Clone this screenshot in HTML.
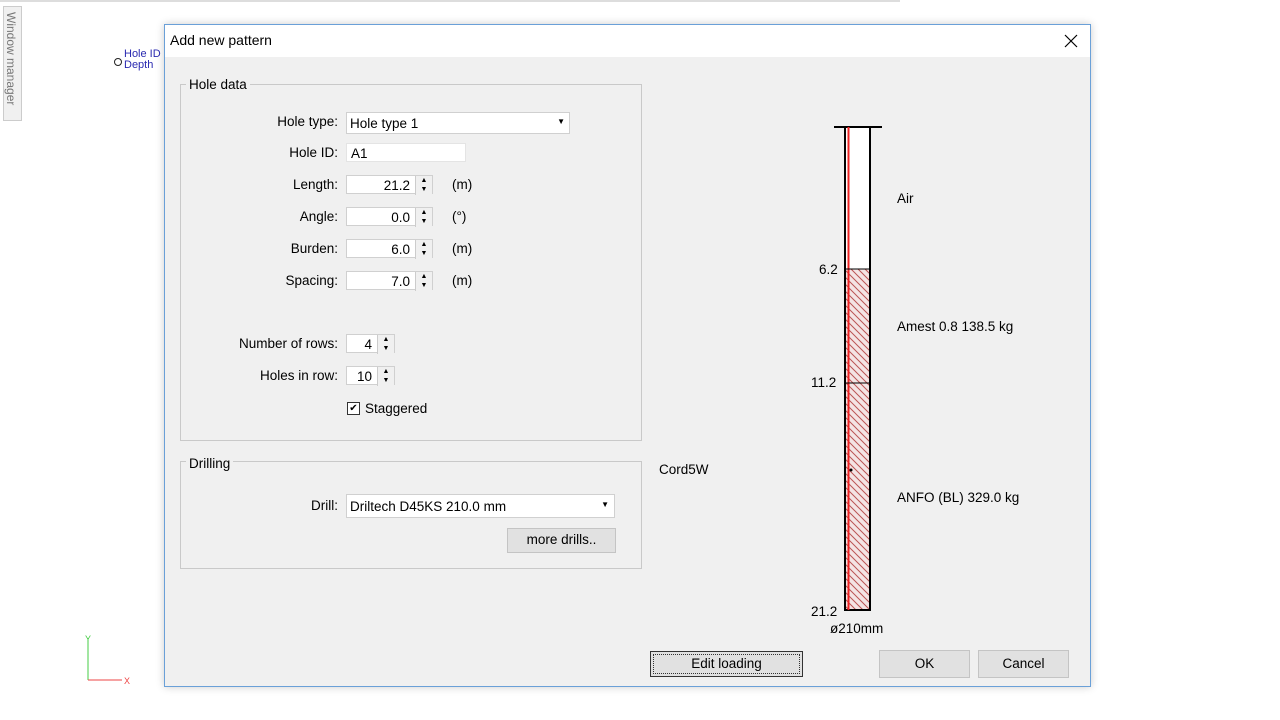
<!DOCTYPE html>
<html><head><meta charset="utf-8"><style>
body{margin:0;width:1280px;height:720px;background:#fff;position:relative;overflow:hidden;font-family:"Liberation Sans",sans-serif;font-size:13.5px;color:#000}
.a{position:absolute}
.lbl{position:absolute;text-align:right;width:150px}
.inp{position:absolute;background:#fff;border:1px solid #d0d0d0;height:19px;box-sizing:border-box}
.spin{position:absolute;width:17px;height:19px;border-left:1px solid #ccc;background:#f0f0f0;box-sizing:border-box;font-size:7px;line-height:9px;text-align:center}
.btn{position:absolute;background:#e1e1e1;border:1px solid #c4c4c4;box-sizing:border-box;text-align:center;line-height:22px}
.grp{position:absolute;border:1px solid #c9c9c9;box-sizing:border-box}
.gt{position:absolute;background:#f0f0f0;padding:0 3px}
</style></head><body>
<div class="a" style="left:0;top:0;width:900px;height:2px;background:#ddd"></div>
<div class="a" style="left:3px;top:6px;width:19px;height:115px;background:#f0f0f0;border:1px solid #ccc;box-sizing:border-box"></div>
<div class="a" style="left:4px;top:12px;writing-mode:vertical-rl;font-size:12px;color:#777">Window manager</div>
<div class="a" style="left:114px;top:58px;width:6px;height:6px;border:1px solid #222;border-radius:50%"></div>
<div class="a" style="left:124px;top:49px;font-size:11px;color:#2a2ab0;line-height:11px">Hole ID<br>Depth</div>
<svg class="a" style="left:80px;top:633px" width="60" height="55"><line x1="8" y1="5" x2="8" y2="47" stroke="#4c4"/><line x1="8" y1="47" x2="42" y2="47" stroke="#e44"/><text x="5" y="9" font-size="9" fill="#4c4">Y</text><text x="44" y="51" font-size="9" fill="#e44">X</text></svg>

<div class="a" style="left:164px;top:24px;width:927px;height:663px;border:1px solid #6aa0d8;box-sizing:border-box;background:#f0f0f0;box-shadow:0 0 8px rgba(0,0,0,.2)"></div>
<div class="a" style="left:165px;top:25px;width:925px;height:32px;background:#fff"></div>
<div class="a" style="left:170px;top:32px;font-size:14px">Add new pattern</div>
<svg class="a" style="left:1064px;top:34px" width="14" height="14"><path d="M1,1 L13,13 M13,1 L1,13" stroke="#000" stroke-width="1.2"/></svg>

<div class="grp" style="left:180px;top:84px;width:462px;height:357px"></div>
<div class="gt" style="left:186px;top:77px">Hole data</div>
<div class="lbl" style="left:188px;top:114px">Hole type:</div>
<div class="inp" style="left:346px;top:112px;width:224px;height:22px"><span style="position:absolute;left:3px;top:3px">Hole type 1</span><span style="position:absolute;right:4px;top:4px;font-size:8px">▼</span></div>
<div class="lbl" style="left:188px;top:145px">Hole ID:</div>
<div class="inp" style="left:346px;top:143px;width:120px;border-color:#e4e4e4"><span style="position:absolute;left:4px;top:2px">A1</span></div>
<div class="lbl" style="left:188px;top:177px">Length:</div>
<div class="inp" style="left:346px;top:175px;width:87px"><span style="position:absolute;right:22px;top:2px">21.2</span><div class="spin" style="right:0;top:0">▲<br>▼</div></div>
<div class="a" style="left:452px;top:177px">(m)</div>
<div class="lbl" style="left:188px;top:209px">Angle:</div>
<div class="inp" style="left:346px;top:207px;width:87px"><span style="position:absolute;right:22px;top:2px">0.0</span><div class="spin" style="right:0;top:0">▲<br>▼</div></div>
<div class="a" style="left:452px;top:209px">(°)</div>
<div class="lbl" style="left:188px;top:241px">Burden:</div>
<div class="inp" style="left:346px;top:239px;width:87px"><span style="position:absolute;right:22px;top:2px">6.0</span><div class="spin" style="right:0;top:0">▲<br>▼</div></div>
<div class="a" style="left:452px;top:241px">(m)</div>
<div class="lbl" style="left:188px;top:273px">Spacing:</div>
<div class="inp" style="left:346px;top:271px;width:87px"><span style="position:absolute;right:22px;top:2px">7.0</span><div class="spin" style="right:0;top:0">▲<br>▼</div></div>
<div class="a" style="left:452px;top:273px">(m)</div>
<div class="lbl" style="left:188px;top:336px">Number of rows:</div>
<div class="inp" style="left:346px;top:334px;width:49px"><span style="position:absolute;right:22px;top:2px">4</span><div class="spin" style="right:0;top:0">▲<br>▼</div></div>
<div class="lbl" style="left:188px;top:368px">Holes in row:</div>
<div class="inp" style="left:346px;top:366px;width:49px"><span style="position:absolute;right:22px;top:2px">10</span><div class="spin" style="right:0;top:0">▲<br>▼</div></div>
<div class="a" style="left:347px;top:402px;width:13px;height:13px;background:#fff;border:1px solid #333;box-sizing:border-box;font-size:10px;line-height:11px;text-align:center">✔</div>
<div class="a" style="left:365px;top:401px">Staggered</div>

<div class="grp" style="left:180px;top:461px;width:462px;height:108px"></div>
<div class="gt" style="left:186px;top:456px">Drilling</div>
<div class="lbl" style="left:188px;top:498px">Drill:</div>
<div class="inp" style="left:346px;top:494px;width:269px;height:24px"><span style="position:absolute;left:3px;top:4px">Driltech D45KS 210.0 mm</span><span style="position:absolute;right:5px;top:5px;font-size:8px">▼</span></div>
<div class="btn" style="left:507px;top:528px;width:109px;height:25px">more drills..</div>

<div class="a" style="left:659px;top:462px">Cord5W</div>
<svg class="a" style="left:800px;top:120px" width="250" height="520">
<defs><pattern id="h" width="7" height="7" patternUnits="userSpaceOnUse"><path d="M-2,-2 L9,9 M-2,5 L2,9 M5,-2 L9,2" stroke="#b55" stroke-width="1"/></pattern></defs>
<rect x="45" y="7" width="25" height="142" fill="#fff"/>
<rect x="45" y="149" width="25" height="341" fill="#f4e4e4"/>
<rect x="45" y="149" width="25" height="341" fill="url(#h)"/>
<line x1="34" y1="7" x2="82" y2="7" stroke="#000" stroke-width="2"/>
<line x1="45" y1="7" x2="45" y2="491" stroke="#000" stroke-width="2"/>
<line x1="70" y1="7" x2="70" y2="491" stroke="#000" stroke-width="2"/>
<line x1="44" y1="490" x2="71" y2="490" stroke="#000" stroke-width="2"/>
<line x1="48.5" y1="7" x2="48.5" y2="490" stroke="#e22" stroke-width="2"/>
<line x1="45" y1="149" x2="70" y2="149" stroke="#000"/>
<line x1="45" y1="263" x2="70" y2="263" stroke="#000"/>
<circle cx="51" cy="350" r="1.5" fill="#000"/>
</svg>
<div class="a" style="left:819px;top:262px">6.2</div>
<div class="a" style="left:811px;top:375px">11.2</div>
<div class="a" style="left:811px;top:604px">21.2</div>
<div class="a" style="left:830px;top:621px">ø210mm</div>
<div class="a" style="left:897px;top:191px">Air</div>
<div class="a" style="left:897px;top:319px">Amest 0.8 138.5 kg</div>
<div class="a" style="left:897px;top:490px">ANFO (BL) 329.0 kg</div>

<div class="btn" style="left:650px;top:651px;width:153px;height:26px;border:1px solid #333;line-height:24px"><div style="position:absolute;inset:2px;border:1px dotted #333"></div>Edit loading</div>
<div class="btn" style="left:879px;top:650px;width:91px;height:28px;line-height:26px">OK</div>
<div class="btn" style="left:978px;top:650px;width:91px;height:28px;line-height:26px">Cancel</div>
</body></html>
